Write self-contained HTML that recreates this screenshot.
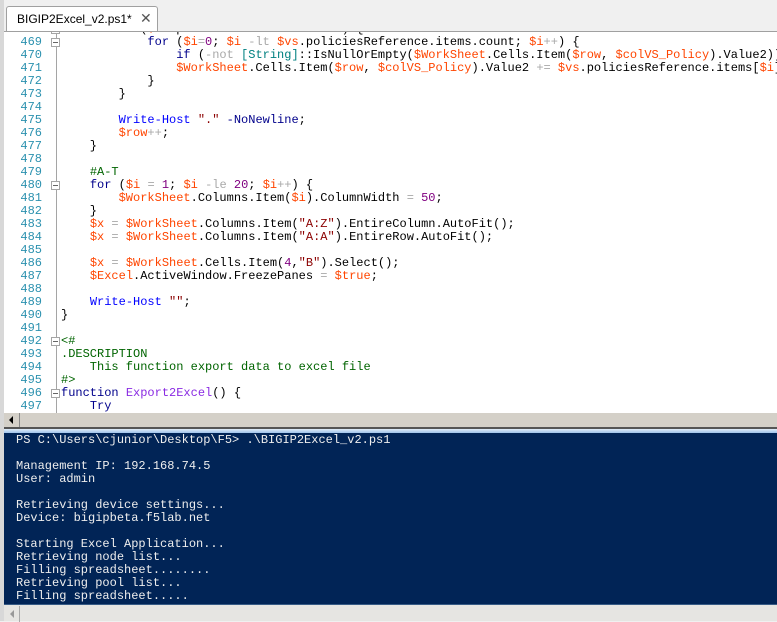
<!DOCTYPE html>
<html><head><meta charset="utf-8"><style>
*{margin:0;padding:0;box-sizing:border-box}
body{width:777px;height:621px;overflow:hidden;background:#f0f0f0;position:relative;font-family:"Liberation Mono",monospace;font-size:12px}
.tab{position:absolute;left:6px;top:6px;width:152px;height:26px;background:#fff;border:1px solid #a0a0a0;border-bottom:none;border-radius:3px 3px 0 0;font-family:"Liberation Sans",sans-serif;font-size:12px;padding:5px 0 0 10px;color:#000}
.tab .x{position:absolute;left:133px;top:3px;font-size:14px;color:#555}
.ed{position:absolute;left:4px;top:31px;width:773px;height:382px;background:#fff;border-top:1px solid #a0a0a0;overflow:hidden}
.lg{position:absolute;left:0;top:0;width:4px;height:621px;background:#d8d8d8}
.ln{position:absolute;left:0;width:38px;text-align:right;color:#2b91af;height:13px;line-height:13px;white-space:pre}
.cd{position:absolute;left:57px;height:13px;line-height:13px;white-space:pre;color:#000}
.vl{position:absolute;left:52px;top:0;width:1px;height:382px;background:#a5a5a5}
.fb{position:absolute;left:47px;width:9px;height:9px;border:1px solid #a5a5a5;background:#fff}
.fb:after{content:"";position:absolute;left:1px;top:3px;width:5px;height:1px;background:#666}
.k{color:#00008b}.v{color:#ff4500}.o{color:#a9a9a9}.s{color:#8b0000}.c{color:#006400}.n{color:#800080}.f{color:#0000ff}.t{color:#008080}.p{color:#8a2be2}
.sb{position:absolute;left:4px;top:413px;width:773px;height:14px;background:#d4d0c8}
.sb .a{position:absolute;left:0;top:0;width:16px;height:14px;background:#d4d0c8;border-right:1px solid #888}
.sb .a:after{content:"";position:absolute;left:5px;top:3px;border-right:4px solid #000;border-top:4px solid transparent;border-bottom:4px solid transparent}
.sep{position:absolute;left:4px;top:427px;width:773px;height:2px;background:#555}
.sep2{position:absolute;left:4px;top:429px;width:773px;height:4px;background:linear-gradient(#e0ecf8,#9fc3ea)}
.con{position:absolute;left:4px;top:433px;width:773px;height:171px;background:#012456;color:#eee;overflow:hidden}
.con div{position:absolute;left:12px;height:13px;line-height:13px;white-space:pre}
.bot{position:absolute;left:4px;top:604px;width:773px;height:17px;background:#e6e5e2;border-top:1px solid #365a85}
.bot .a{position:absolute;left:0;top:1px;width:16px;height:16px;border-right:1px solid #aaa}
.bot .a:after{content:"";position:absolute;left:6px;top:4px;border-right:4px solid #999;border-top:4px solid transparent;border-bottom:4px solid transparent}
</style></head><body>
<div class="lg"></div>
<div class="tab">BIGIP2Excel_v2.ps1*<span class="x">✕</span></div>
<div class="ed">
<div class="vl"></div>
<div class="ln" style="top:-9px">468</div><div class="cd" style="top:-9px">        <span class="k">if</span> (<span class="v">$vs</span>.policiesReference.items) {</div>
<div class="fb" style="top:-7px"></div>
<div class="ln" style="top:4px">469</div><div class="fb" style="top:6px"></div><div class="cd" style="top:4px">            <span class="k">for</span> (<span class="v">$i</span><span class="o">=</span><span class="n">0</span>; <span class="v">$i</span> <span class="o">-lt</span> <span class="v">$vs</span>.policiesReference.items.count; <span class="v">$i</span><span class="o">++</span>) {</div>
<div class="ln" style="top:17px">470</div><div class="cd" style="top:17px">                <span class="k">if</span> (<span class="o">-not</span> <span class="t">[String]</span>::IsNullOrEmpty(<span class="v">$WorkSheet</span>.Cells.Item(<span class="v">$row</span>, <span class="v">$colVS_Policy</span>).Value2)) {</div>
<div class="ln" style="top:30px">471</div><div class="cd" style="top:30px">                <span class="v">$WorkSheet</span>.Cells.Item(<span class="v">$row</span>, <span class="v">$colVS_Policy</span>).Value2 <span class="o">+=</span> <span class="v">$vs</span>.policiesReference.items[<span class="v">$i</span>]</div>
<div class="ln" style="top:43px">472</div><div class="cd" style="top:43px">            }</div>
<div class="ln" style="top:56px">473</div><div class="cd" style="top:56px">        }</div>
<div class="ln" style="top:69px">474</div>
<div class="ln" style="top:82px">475</div><div class="cd" style="top:82px">        <span class="f">Write-Host</span> <span class="s">"."</span> <span class="k">-NoNewline</span>;</div>
<div class="ln" style="top:95px">476</div><div class="cd" style="top:95px">        <span class="v">$row</span><span class="o">++</span>;</div>
<div class="ln" style="top:108px">477</div><div class="cd" style="top:108px">    }</div>
<div class="ln" style="top:121px">478</div>
<div class="ln" style="top:134px">479</div><div class="cd" style="top:134px">    <span class="c">#A-T</span></div>
<div class="ln" style="top:147px">480</div><div class="fb" style="top:149px"></div><div class="cd" style="top:147px">    <span class="k">for</span> (<span class="v">$i</span> <span class="o">=</span> <span class="n">1</span>; <span class="v">$i</span> <span class="o">-le</span> <span class="n">20</span>; <span class="v">$i</span><span class="o">++</span>) {</div>
<div class="ln" style="top:160px">481</div><div class="cd" style="top:160px">        <span class="v">$WorkSheet</span>.Columns.Item(<span class="v">$i</span>).ColumnWidth <span class="o">=</span> <span class="n">50</span>;</div>
<div class="ln" style="top:173px">482</div><div class="cd" style="top:173px">    }</div>
<div class="ln" style="top:186px">483</div><div class="cd" style="top:186px">    <span class="v">$x</span> <span class="o">=</span> <span class="v">$WorkSheet</span>.Columns.Item(<span class="s">"A:Z"</span>).EntireColumn.AutoFit();</div>
<div class="ln" style="top:199px">484</div><div class="cd" style="top:199px">    <span class="v">$x</span> <span class="o">=</span> <span class="v">$WorkSheet</span>.Columns.Item(<span class="s">"A:A"</span>).EntireRow.AutoFit();</div>
<div class="ln" style="top:212px">485</div>
<div class="ln" style="top:225px">486</div><div class="cd" style="top:225px">    <span class="v">$x</span> <span class="o">=</span> <span class="v">$WorkSheet</span>.Cells.Item(<span class="n">4</span>,<span class="s">"B"</span>).Select();</div>
<div class="ln" style="top:238px">487</div><div class="cd" style="top:238px">    <span class="v">$Excel</span>.ActiveWindow.FreezePanes <span class="o">=</span> <span class="v">$true</span>;</div>
<div class="ln" style="top:251px">488</div>
<div class="ln" style="top:264px">489</div><div class="cd" style="top:264px">    <span class="f">Write-Host</span> <span class="s">""</span>;</div>
<div class="ln" style="top:277px">490</div><div class="cd" style="top:277px">}</div>
<div class="ln" style="top:290px">491</div>
<div class="ln" style="top:303px">492</div><div class="fb" style="top:305px"></div><div class="cd" style="top:303px"><span class="c">&lt;#</span></div>
<div class="ln" style="top:316px">493</div><div class="cd" style="top:316px"><span class="c">.DESCRIPTION</span></div>
<div class="ln" style="top:329px">494</div><div class="cd" style="top:329px"><span class="c">    This function export data to excel file</span></div>
<div class="ln" style="top:342px">495</div><div class="cd" style="top:342px"><span class="c">#&gt;</span></div>
<div class="ln" style="top:355px">496</div><div class="fb" style="top:357px"></div><div class="cd" style="top:355px"><span class="k">function</span> <span class="p">Export2Excel</span>() {</div>
<div class="ln" style="top:368px">497</div><div class="cd" style="top:368px">    <span class="k">Try</span></div>
</div>
<div class="sb"><div class="a"></div></div>
<div class="sep"></div><div class="sep2"></div>
<div class="con">
<div style="top:1px">PS C:\Users\cjunior\Desktop\F5&gt; .\BIGIP2Excel_v2.ps1</div>
<div style="top:27px">Management IP: 192.168.74.5</div>
<div style="top:40px">User: admin</div>
<div style="top:66px">Retrieving device settings...</div>
<div style="top:79px">Device: bigipbeta.f5lab.net</div>
<div style="top:105px">Starting Excel Application...</div>
<div style="top:118px">Retrieving node list...</div>
<div style="top:131px">Filling spreadsheet........</div>
<div style="top:144px">Retrieving pool list...</div>
<div style="top:157px">Filling spreadsheet.....</div>
</div>
<div class="bot"><div class="a"></div></div>
</body></html>
